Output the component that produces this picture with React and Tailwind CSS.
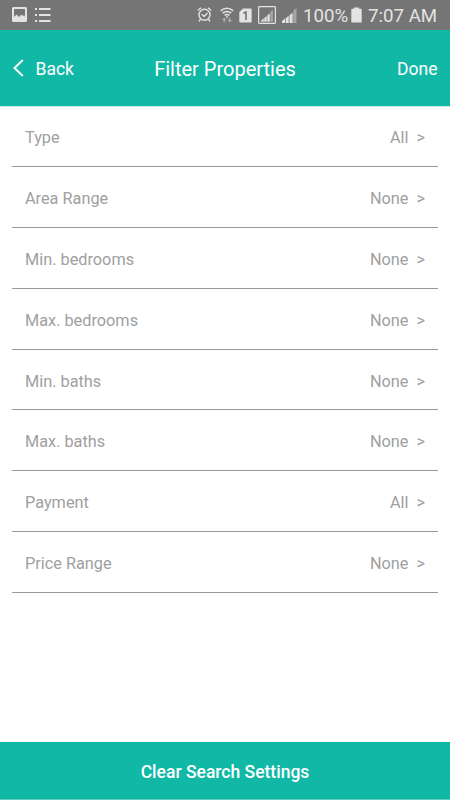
const filters = [
  { name: "Type", value: "All" },
  { name: "Area Range", value: "None" },
  { name: "Min. bedrooms", value: "None" },
  { name: "Max. bedrooms", value: "None" },
  { name: "Min. baths", value: "None" },
  { name: "Max. baths", value: "None" },
  { name: "Payment", value: "All" },
  { name: "Price Range", value: "None" },
];

function NotificationIcons() {
  return (
    <div className="flex items-center gap-[7px]">
      <svg width="16" height="16" viewBox="0 0 16 16">
        <path fillRule="evenodd" fill="currentColor" d="M1.500 0h12Q15 0 15 1.500v12q0 1.500-1.500 1.500h-12Q0 15 0 13.500v-12Q0 0 1.500 0ZM2 2v8l2.500-2.500L7 10l2.500-2.500 1.500 1.500 1-1 1 2V2Z" />
      </svg>
      <svg width="16" height="16" viewBox="0 0 16 16" fill="currentColor">
        <path d="M0 1h2v2H0zM4 1h11.500v2H4zM0 7h2v2H0zM4 7h11.500v2H4zM0 13h2v2H0zM4 13h11.500v2H4z" />
      </svg>
    </div>
  )
}

function AlarmIcon() {
  return (
    <svg className="shrink-0" width="15" height="16" viewBox="0 0 15 16" fill="none" stroke="currentColor" strokeWidth="1.400">
      <circle cx="7.500" cy="7.800" r="5.500" />
      <path d="M.8 3.500 4 .8M11 .8 14.200 3.500M4.800 7.300l2.300 2.200L10.500 6M3.500 12.200 2 14.500M11.500 12.200l1.500 2.300" />
    </svg>
  )
}

function WifiIcon() {
  return (
    <svg className="shrink-0" width="14" height="16" viewBox="0 0 14 16" fill="none" stroke="currentColor" strokeWidth="1.500">
      <path d="M.7 3.800Q7-1.400 13.300 3.800M2.700 6.200q4.300-3.500 8.600 0M4.600 8.400q2.400-1.900 4.800 0" />
      <circle cx="7" cy="10" r=".9" fill="currentColor" stroke="none" />
      <g opacity=".5" fill="currentColor" stroke="none">
        <path d="M4.300 10.500 6.500 13H5v2.200H3.600V13H2zM9.700 15.500 7.500 13H9v-2.200h1.400V13H12z" />
      </g>
    </svg>
  )
}

function SimIcon() {
  return (
    <svg className="shrink-0" width="13" height="15" viewBox="0 0 13 15">
      <path fill="currentColor" d="M4 .5h7.500Q12.700.5 12.700 1.700v11.600q0 1.200-1.200 1.200h-10Q.3 14.500.3 13.300V4z" />
      <path fill="none" stroke="#757575" strokeWidth="1.600" d="M4.300 5.300 7 4v8" />
    </svg>
  )
}

function SignalBars() {
  return (
    <>
      <path opacity=".45" d="M11.300 2.500 14.500 0v15h-3.200z" />
      <path d="M0 13l3-2.400V15H0zM3.700 10.200 6.700 7.800V15h-3zM7.500 7.200 10.600 4.700V15H7.500z" />
    </>
  )
}

function StatusBar() {
  return (
    <div className="flex h-[30px] shrink-0 items-center justify-between bg-[#757575] pl-3 pr-[13px] text-[#e3e3e3]">
      <NotificationIcons />
      <div className="flex items-center">
        <AlarmIcon />
        <div className="ml-2 flex"><WifiIcon /></div>
        <div className="ml-[5px] flex"><SimIcon /></div>
        <svg className="ml-[6px] shrink-0" width="18" height="18" viewBox="0 0 18 18" fill="currentColor">
          <rect x=".6" y=".6" width="16.800" height="16.800" rx=".8" fill="none" stroke="currentColor" strokeWidth="1.200" />
          <g transform="translate(3.300 3.800) scale(.8)"><SignalBars /></g>
        </svg>
        <svg className="ml-[6px] shrink-0" width="15" height="15" viewBox="0 0 15 15" fill="currentColor">
          <SignalBars />
        </svg>
        <span className="ml-[6px] w-[45px] whitespace-nowrap pt-px text-[18.700px] leading-[30px]">100%</span>
        <svg className="ml-[3px] shrink-0" width="11" height="16" viewBox="0 0 11 16" fill="currentColor">
          <path d="M3 .5h5v1.300h2q.7 0 .7.700v12.300q0 .7-.7.700H1q-.7 0-.7-.7V2.500q0-.7.700-.7h2z" />
        </svg>
        <span className="ml-[6px] w-[69px] whitespace-nowrap pt-px text-[18.700px] leading-[30px]">7:07 AM</span>
      </div>
    </div>
  )
}

function Header() {
  return (
    <div className="grid h-[77px] shrink-0 grid-cols-[1fr_auto_1fr] items-center border-b border-[#c9e9e5] bg-[#12b8a6] px-[12.500px] pt-0.5 text-white">
      <button className="flex items-center text-left text-[17.500px]">
        <svg className="mb-0.5 mr-3" width="11" height="18" viewBox="0 0 11 18" fill="none" stroke="currentColor" strokeWidth="1.900">
          <path d="M9.800 1 1.500 9 9.800 17" />
        </svg>
        Back
      </button>
      <h1 className="text-[20px]">Filter Properties</h1>
      <button className="text-right text-[17.500px]">Done</button>
    </div>
  )
}

function FilterRow({ name, value }) {
  return (
    <div className="flex h-[60.900px] items-center justify-between border-b border-[#999999] pl-[13px] pr-[12.500px] pt-[4.500px] text-[16.300px] text-[#a0a0a0]">
      <span>{name}</span>
      <span className="flex">
        {value}
        <span className="ml-2">&gt;</span>
      </span>
    </div>
  )
}

export default function App() {
  return (
    <div className="flex h-screen flex-col bg-white font-['Roboto',sans-serif]">
      <StatusBar />
      <Header />
      <div className="-mt-px flex-1 pl-3 pr-[12.500px]">
        {filters.map((filter) => <FilterRow key={filter.name} {...filter} />)}
      </div>
      <button className="h-[58px] shrink-0 border-b border-[#5fcdc1] bg-[#12b8a6] pt-1 text-[17.500px] font-medium text-white">
        Clear Search Settings
      </button>
    </div>
  )
}
